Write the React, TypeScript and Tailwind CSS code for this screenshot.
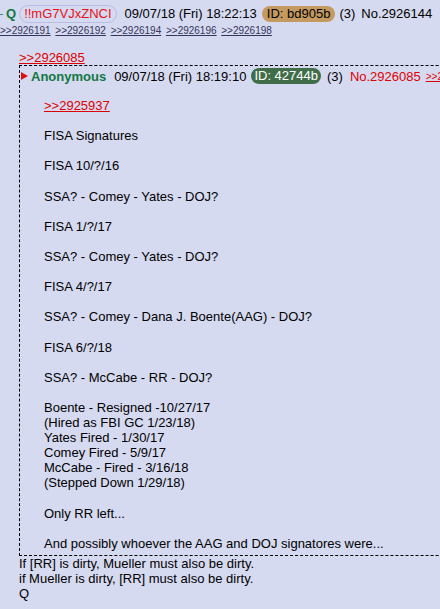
import React from "react"

const backlinks = ["2926191", "2926192", "2926194", "2926196", "2926198"]

const body: string[] = [
  "FISA Signatures",
  "",
  "FISA 10/?/16",
  "",
  "SSA? - Comey - Yates - DOJ?",
  "",
  "FISA 1/?/17",
  "",
  "SSA? - Comey - Yates - DOJ?",
  "",
  "FISA 4/?/17",
  "",
  "SSA? - Comey - Dana J. Boente(AAG) - DOJ?",
  "",
  "FISA 6/?/18",
  "",
  "SSA? - McCabe - RR - DOJ?",
  "",
  "Boente - Resigned -10/27/17",
  "(Hired as FBI GC 1/23/18)",
  "Yates Fired - 1/30/17",
  "Comey Fired - 5/9/17",
  "McCabe - Fired - 3/16/18",
  "(Stepped Down 1/29/18)",
  "",
  "Only RR left...",
  "",
  "And possibly whoever the AAG and DOJ signatores were...",
]

function Triangle() {
  return (
    <svg width="7" height="8" viewBox="0 0 7 8" aria-hidden="true" className="shrink-0">
      <path d="M0 0 L7 4 L0 8 Z" fill="#dd1111" />
    </svg>
  )
}

export default function App() {
  return (
    <div className="min-h-screen w-[440px] overflow-hidden bg-[#d6daf0] font-['Liberation_Sans',Arial,sans-serif] text-[13px] leading-[15.1px] text-black">
      {/* op header */}
      <div className="flex h-[26px] items-center whitespace-nowrap pt-[2px]">
        <div className="h-[1px] w-[3px] shrink-0 bg-[#3d8a78]" />
        <span className="ml-[3px] font-bold text-[#117743]">Q</span>
        <span className="ml-[3px] rounded-full border border-[#b9bde3] px-[4px] leading-[16px] text-[#e8111a]">
          !!mG7VJxZNCI
        </span>
        <span className="ml-[8px]">09/07/18 (Fri) 18:22:13</span>
        <span className="ml-[5px] rounded-full bg-[#c49a60] px-[5px] leading-[16px]">ID: bd905b</span>
        <span className="ml-[4px]">(3)</span>
        <span className="ml-[6px]">No.2926144</span>
      </div>
      <div className="flex h-[10px] gap-[4.7px] whitespace-nowrap text-[10px] leading-[10px] text-[#34345c]">
        {backlinks.map((b) => (
          <span key={b} className="underline">
            &gt;&gt;{b}
          </span>
        ))}
      </div>

      <div className="ml-[19px] mt-[14px] text-[#dd0000] underline">&gt;&gt;2926085</div>

      {/* quoted post */}
      <div className="ml-[19px] w-[520px] border-y border-l border-dashed border-black pb-[4px]">
        <div className="flex h-[20px] items-center whitespace-nowrap pl-[1px]">
          <Triangle />
          <span className="ml-[3px] font-bold text-[#117743]">Anonymous</span>
          <span className="ml-[8px]">09/07/18 (Fri) 18:19:10</span>
          <span className="ml-[5px] rounded-full bg-[#3f6e49] px-[3px] leading-[16px] text-white">ID: 42744b</span>
          <span className="ml-[6px]">(3)</span>
          <span className="ml-[7px] text-[#dd0000]">No.2926085</span>
          <span className="ml-[5px] text-[10px] text-[#dd0000] underline">&gt;&gt;2926085</span>
        </div>
        <div className="mt-[12px] pl-[24px]">
          <div className="text-[#dd0000] underline">&gt;&gt;2925937</div>
          <div className="h-[15.1px]" />
          {body.map((line, i) =>
            line ? (
              <div key={i} className="whitespace-nowrap">
                {line}
              </div>
            ) : (
              <div key={i} className="h-[15.1px]" />
            )
          )}
        </div>
      </div>

      <div className="ml-[19px]">
        <div>If [RR] is dirty, Mueller must also be dirty.</div>
        <div>if Mueller is dirty, [RR] must also be dirty.</div>
        <div>Q</div>
      </div>
    </div>
  )
}
